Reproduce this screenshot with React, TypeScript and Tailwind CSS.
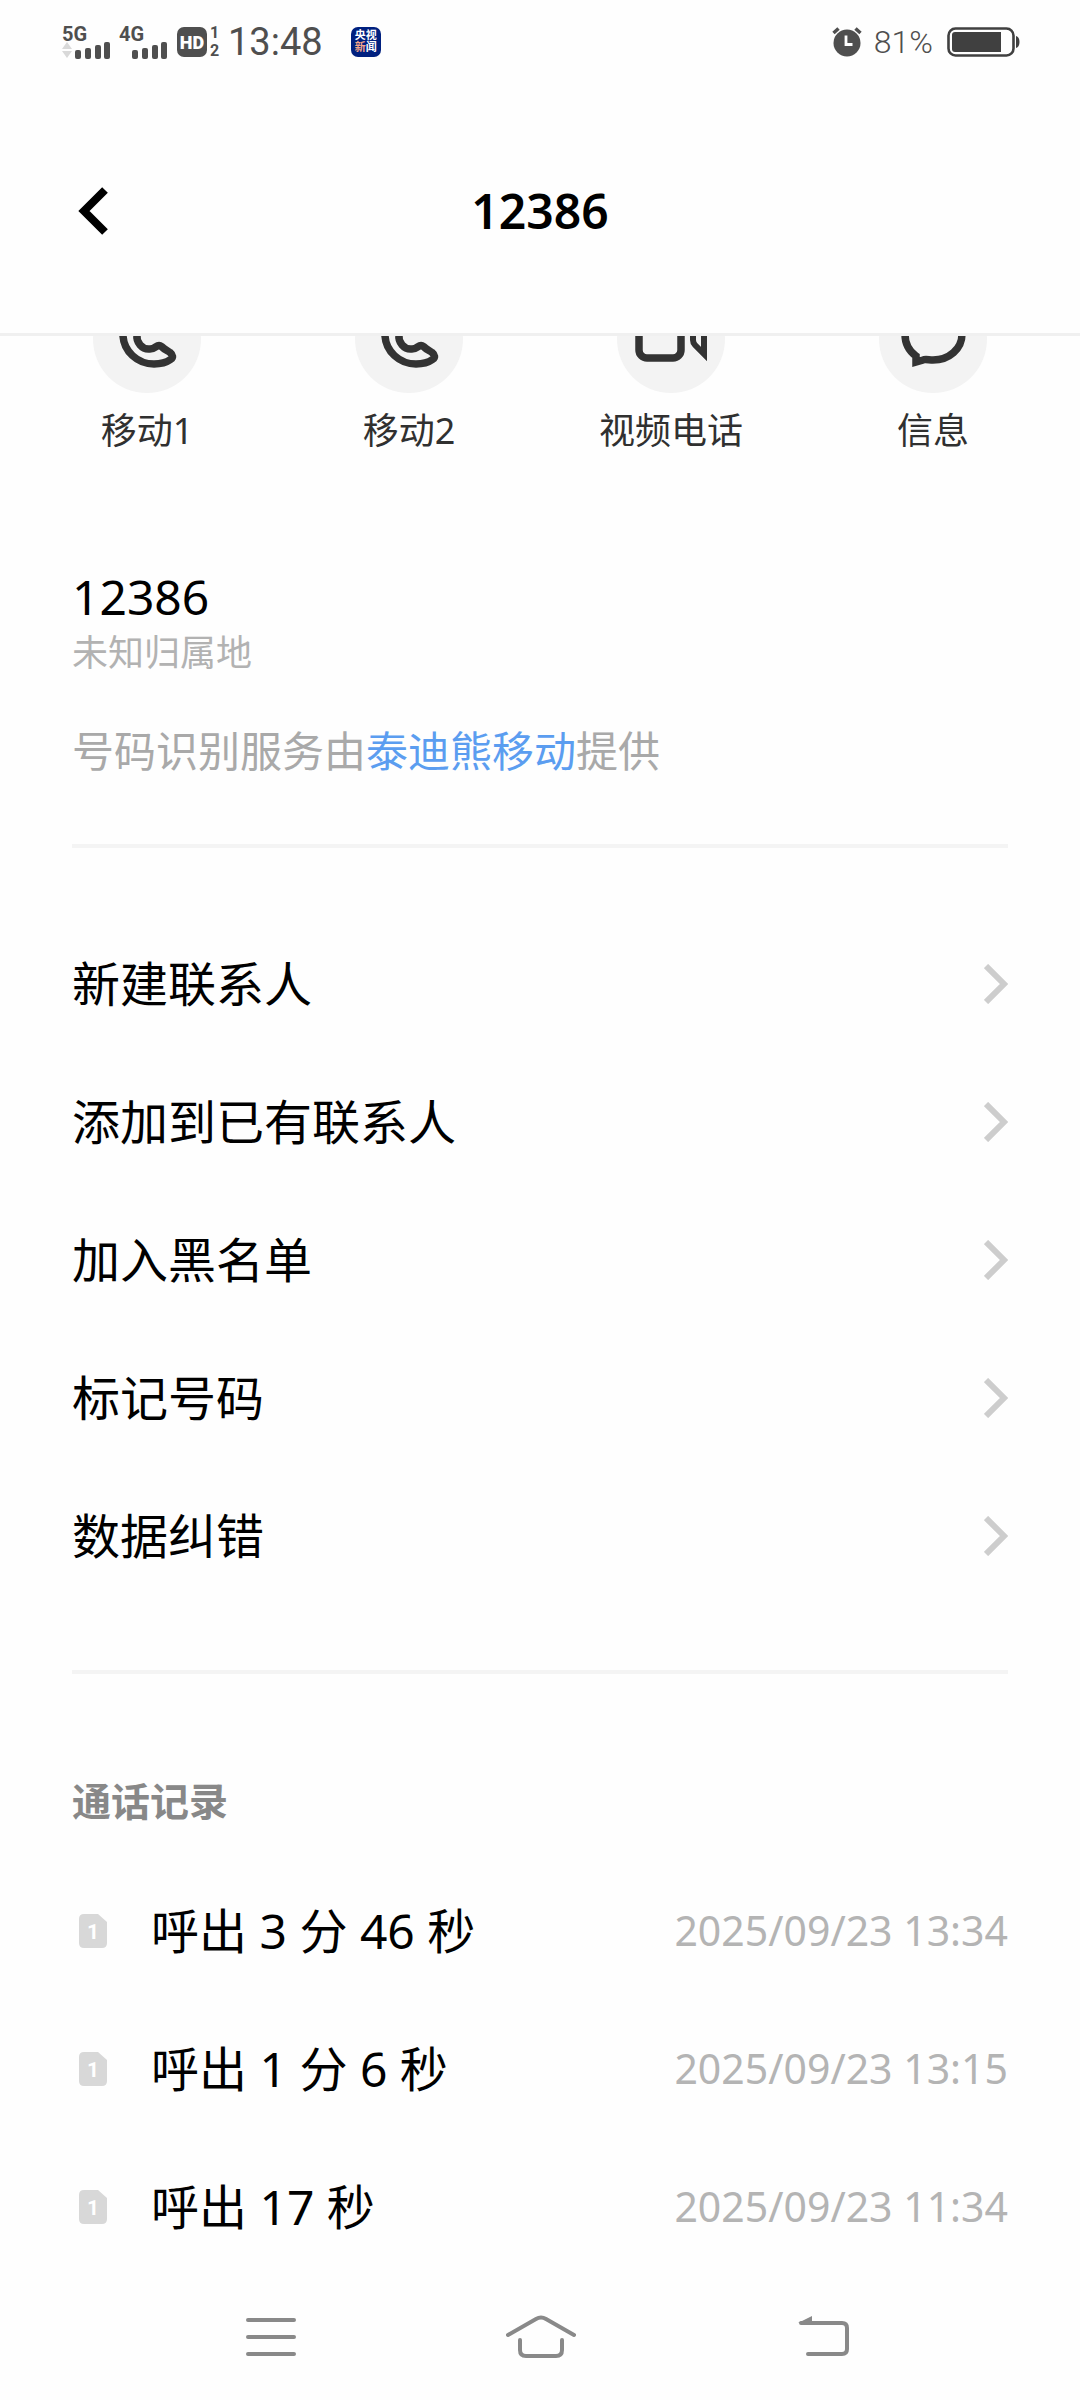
type Action = {
  id: number;
  name: string;
  icon: "phone" | "video" | "message";
};

type CallRecord = {
  id: number;
  sim: number;
  text: string;
  time: string;
};

const actions: Action[] = [
  { id: 1, name: "移动1", icon: "phone" },
  { id: 2, name: "移动2", icon: "phone" },
  { id: 3, name: "视频电话", icon: "video" },
  { id: 4, name: "信息", icon: "message" },
];

const menuItems = [
  "新建联系人",
  "添加到已有联系人",
  "加入黑名单",
  "标记号码",
  "数据纠错",
];

const callRecords: CallRecord[] = [
  { id: 1, sim: 1, text: "呼出 3 分 46 秒", time: "2025/09/23 13:34" },
  { id: 2, sim: 1, text: "呼出 1 分 6 秒", time: "2025/09/23 13:15" },
  { id: 3, sim: 1, text: "呼出 17 秒", time: "2025/09/23 11:34" },
];

const SignalBars = () => (
  <svg width="35" height="17" viewBox="0 0 35 17" fill="#4f4f4f">
    <rect x="0" y="8" width="6" height="9" rx="2" />
    <rect x="10" y="6" width="6" height="11" rx="2" />
    <rect x="20" y="3" width="6" height="14" rx="2" />
    <rect x="29" y="0" width="6" height="17" rx="2" />
  </svg>
);

const Signal = ({ type, arrows }: { type: string; arrows?: boolean }) => (
  <div className="flex w-[48px] flex-col">
    <span className="text-[20px] leading-[16px] font-bold">{type}</span>
    <div className="flex items-end justify-between">
      <svg width="10" height="17" viewBox="0 0 10 17" fill="#d9d9d9">
        {arrows && <path d="M5 0 10 7H0ZM0 9H10L5 16Z" />}
      </svg>
      <SignalBars />
    </div>
  </div>
);

const StatusBar = () => (
  <div className="flex h-[84px] items-center justify-between pr-[60px] pl-[62px] font-[Roboto,'Noto_Sans_CJK_SC',sans-serif] text-[#4f4f4f]">
    <div className="flex items-center">
      <Signal type="5G" arrows />
      <div className="ml-[9px]">
        <Signal type="4G" />
      </div>
      <span className="ml-[10px] flex h-[30px] w-[30px] items-center justify-center rounded-[7px] bg-[#4f4f4f] text-[18px] font-black text-white">
        HD
      </span>
      <div className="ml-[2px] flex w-[11px] flex-col items-center text-[16px] leading-[18px] font-bold">
        <span>1</span>
        <span>2</span>
      </div>
      <span className="ml-[8px] text-[38px] leading-[48px]">13:48</span>
      <span className="ml-[28px] grid h-[30px] w-[30px] grid-cols-2 place-content-center justify-items-center rounded-[7px] bg-[#00207f] px-[4px] text-[11px] leading-[12px] font-bold text-white">
        <span>央</span>
        <span>视</span>
        <span className="text-[#f3a58a]">新</span>
        <span>闻</span>
      </span>
    </div>
    <div className="flex items-center">
      <svg width="30" height="30" viewBox="0 0 30 30">
        <circle cx="15" cy="16" r="13.5" fill="#4f4f4f" />
        <path d="M1.5 6 6.5 1.5M28.5 6 23.5 1.5" stroke="#4f4f4f" strokeWidth="3.5" />
        <path d="M14 8.5V17.5H20.5" fill="none" stroke="#fff" strokeWidth="2.8" />
      </svg>
      <span className="ml-[12px] text-[32px] leading-[40px] font-light">
        81%
      </span>
      <svg className="ml-[14px]" width="73" height="30" viewBox="0 0 73 30">
        <rect x="1.5" y="1.5" width="65" height="27" rx="7" fill="none" stroke="#404040" strokeWidth="2.6" />
        <path d="M8 5H54V25H8Q5 25 5 22V8Q5 5 8 5Z" fill="#404040" />
        <path d="M69 9Q72.5 10 72.5 15T69 21Z" fill="#404040" />
      </svg>
    </div>
  </div>
);

const ActionIcon = ({ icon }: { icon: Action["icon"] }) => (
  <svg
    className="h-[108px] w-[108px] rounded-full bg-[#f3f3f3]"
    viewBox="0 0 108 108"
    fill="none"
    stroke="#333"
    strokeWidth="7.5"
  >
    {icon === "phone" && (
      <path d="M30 51C31 66 44 79 61 79C67 79 74 77 77.5 74.5C80.5 72.5 80 70 77 67.5C74 65.5 71 64 68.5 61.5C64 58 63 64 57 64C49 65 43 57 44 50C44 46 49 44 47 40L41 31C38 27 34 29 32 35C30 41 30 46 30 51Z" />
    )}
    {icon === "video" && (
      <>
        <rect x="22" y="31" width="42" height="42" rx="8" />
        <path d="M87 36.5V69L78 60Q76 58 76 55V51Q76 48 78 46Z" strokeWidth="6" />
      </>
    )}
    {icon === "message" && (
      <path d="M37 77V71C30 66 26 58 26 49C26 34 38 24 54 24S83 34 83 49S70 75 54 75C50 75 46 74 44 75Z" />
    )}
  </svg>
);

const SimBadge = ({ sim }: { sim: number }) => (
  <svg width="28" height="34" viewBox="0 0 28 34">
    <path d="M5 0H19L28 8V29Q28 34 23 34H5Q0 34 0 29V5Q0 0 5 0Z" fill="#d8d8d8" />
    <text x="14" y="25" textAnchor="middle" fill="#fff" className="font-[Roboto,sans-serif] text-[21px] font-bold">
      {sim}
    </text>
  </svg>
);

const App = () => {
  return (
    <div className="flex min-h-screen flex-col bg-[#fefefe] font-['Noto_Sans','Noto_Sans_CJK_SC',sans-serif] text-black">
      <header className="sticky top-0 z-10 border-b-[3px] border-[#f0f0f0] bg-[#fefefe]">
        <StatusBar />
        <div className="grid h-[249px] grid-cols-[1fr_auto_1fr] items-center px-[78px] pt-1">
          <button aria-label="返回" className="w-[30px]">
            <svg width="30" height="48" viewBox="0 0 30 48" fill="none" stroke="#000" strokeWidth="8">
              <path d="M27 3 6 24 27 45" />
            </svg>
          </button>
          <h1 className="text-[48px] leading-[68px] font-semibold">12386</h1>
        </div>
      </header>

      {/* the action row is scrolled partly under the header */}
      <main className="-mt-[51px]">
        <section className="grid grid-cols-4 px-4">
          {actions.map((action) => (
            <button key={action.id} className="flex flex-col items-center gap-3">
              <ActionIcon icon={action.icon} />
              <span className="text-[36px] leading-[52px] text-[#303030]">
                {action.name}
              </span>
            </button>
          ))}
        </section>

        <div className="px-[72px]">
          <section className="mt-[110px] border-b-4 border-[#f4f4f4] pb-[63px]">
            <p className="text-[48px] leading-[60px]">12386</p>
            <p className="text-[36px] leading-[52px] text-[#b2b2b2]">
              未知归属地
            </p>
            <p className="mt-[42px] text-[42px] leading-[60px] text-[#a9a9a9]">
              号码识别服务由
              <a href="#" className="text-[#5b9df0]">
                泰迪熊移动
              </a>
              提供
            </p>
          </section>

          <section className="border-b-4 border-[#f4f4f4] pt-[67px] pb-[65px]">
            {menuItems.map((item) => (
              <button
                key={item}
                className="flex h-[138px] w-full items-center justify-between text-[48px]"
              >
                {item}
                <svg width="24" height="40" viewBox="0 0 24 40" fill="none" stroke="#cdcdcd" strokeWidth="6">
                  <path d="M2 2 20 20 2 38" />
                </svg>
              </button>
            ))}
          </section>

          <section className="pt-[97px]">
            <h2 className="mb-[31px] text-[39px] leading-[60px] font-bold text-[#888]">
              通话记录
            </h2>
            <ul>
              {callRecords.map((record) => (
                <li key={record.id} className="flex h-[138px] items-center pl-[7px]">
                  <SimBadge sim={record.sim} />
                  <span className="ml-[44px] flex-1 text-[48px]">
                    {record.text}
                  </span>
                  <time className="text-[41px] text-[#b4b4b4]">
                    {record.time}
                  </time>
                </li>
              ))}
            </ul>
          </section>
        </div>
      </main>

      <nav className="mt-auto flex h-[124px] items-center justify-between pr-[231px] pb-[3px] pl-[246px]">
        <button aria-label="最近任务">
          <svg width="50" height="44" viewBox="0 0 50 44" stroke="#898989" strokeWidth="4" strokeLinecap="round">
            <path d="M2 5H48M2 22H48M2 39H48" />
          </svg>
        </button>
        <button aria-label="主屏幕">
          <svg width="70" height="44" viewBox="0 0 70 44" fill="none" stroke="#898989" strokeWidth="4" strokeLinecap="round">
            <path d="M2 20 30 4Q35 1 40 4L68 20" />
            <path d="M14 25V35Q14 41 20 41H50Q56 41 56 35V25" />
          </svg>
        </button>
        <button aria-label="返回上一级">
          <svg width="63" height="44" viewBox="-12 0 63 44" fill="none" stroke="#898989" strokeWidth="4" strokeLinecap="round">
            <path d="M3 8H44Q49 8 49 13V34Q49 39 44 39H10" />
            <path d="M0 8 14 1V8Z" fill="#898989" stroke="none" />
          </svg>
        </button>
      </nav>
    </div>
  );
};

export default App;
